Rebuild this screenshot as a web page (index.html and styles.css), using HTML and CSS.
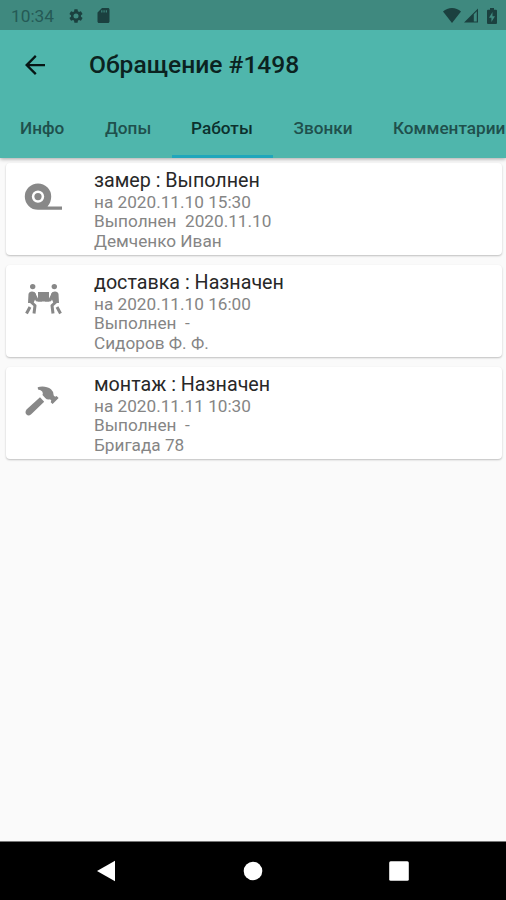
FILE: index.html
```html
<!DOCTYPE html>
<html lang="ru">
<head>
<meta charset="utf-8">
<title>Обращение #1498</title>
<link rel="stylesheet" href="styles.css">
</head>
<body>
<div class="screen">
  <header class="top">
    <div class="status">
      <span class="clock">10:34</span>
      <svg class="gear" viewBox="0 0 24 24"><path fill-rule="evenodd" d="M19.4 13a7.500 7.500 0 0 0 0-2l2.100-1.650c.2-.15.25-.4.120-.64l-2-3.460a.5.500 0 0 0-.6-.22l-2.500 1a7.300 7.300 0 0 0-1.700-.98l-.38-2.650A.5.500 0 0 0 14 2h-4a.5.500 0 0 0-.5.420L9.130 5.070c-.6.250-1.170.580-1.690.980l-2.490-1a.5.500 0 0 0-.61.220l-2 3.460c-.13.220-.07.490.120.640L4.570 11a7.900 7.900 0 0 0 0 2l-2.110 1.650a.5.500 0 0 0-.12.640l2 3.460c.12.220.39.300.61.220l2.490-1c.52.400 1.080.730 1.690.980l.38 2.650c.03.240.240.420.490.420h4c.25 0 .46-.18.490-.42l.38-2.650c.61-.25 1.170-.59 1.690-.98l2.490 1c.23.090.490 0 .61-.22l2-3.460a.5.500 0 0 0-.12-.64zM12 15.800a3.800 3.800 0 1 1 0-7.600 3.800 3.800 0 0 1 0 7.600z"/></svg>
      <svg class="sd" viewBox="4 2 16 20"><path fill-rule="evenodd" d="M18 2h-8L4 8v12c0 1.100.9 2 2 2h12c1.100 0 2-.9 2-2V4c0-1.100-.9-2-2-2zM9 5h1.500v3H9zm3 0h1.500v3H12zm3 0h1.500v3H15z"/></svg>
      <span class="spacer"></span>
      <svg class="wifi" viewBox="0 0 18 15"><path d="M9 15 0 3.600C2.500 1.200 5.600 0 9 0s6.500 1.200 9 3.600z"/></svg>
      <svg class="signal" viewBox="0 0 15 15"><path fill-rule="evenodd" d="M0 15 15 0v15zM10.500 6.200V13.800h3.200V3z"/></svg>
      <svg class="battery" viewBox="0 0 10 16"><path fill-rule="evenodd" d="M3 0h4v1.700h2q1 0 1 1V15q0 1-1 1H1q-1 0-1-1V2.700q0-1 1-1h2zM5.500 4 2 9.800h2.400V14L8 8.200H5.500z"/></svg>
    </div>
    <div class="appbar">
      <svg class="back" viewBox="4 4 16 16"><path d="M20 11.100H7.600l5.650-5.700L12 4l-8 8 8 8 1.300-1.400-5.700-5.700H20z"/></svg>
      <h1>Обращение #1498</h1>
    </div>
    <nav class="tabs">
      <a class="tab info">Инфо</a>
      <a class="tab extras">Допы</a>
      <a class="tab active">Работы</a>
      <a class="tab calls">Звонки</a>
      <a class="tab comments">Комментарии</a>
    </nav>
  </header>
  <main class="list">
    <article class="card">
      <div class="icon"><svg viewBox="0 0 40 40"><path fill-rule="evenodd" d="M38 29.800H14A13.200 13.200 0 1 1 27.200 16.600q0 6-3.700 10H38zM14 10.400a6.200 6.200 0 1 0 0 12.400 6.200 6.200 0 0 0 0-12.400z"/><circle cx="14" cy="16.600" r="3.600"/></svg></div>
      <div class="text"><h2>замер : Выполнен</h2><p>на 2020.11.10 15:30</p><p>Выполнен&nbsp; 2020.11.10</p><p>Демченко Иван</p></div>
    </article>
    <article class="card">
      <div class="icon"><svg viewBox="0 0 40 40"><circle cx="8.700" cy="4.600" r="2.700"/><circle cx="30.300" cy="4.600" r="2.700"/><path d="M14 10h11v9.500H14z"/><g class="limbs"><path d="M7.500 12 6.500 19.500l4.500 4-1 8M9.500 11l3.500 7H18M6 25l-3.500 6.500M31.500 12l1 7.500-4.500 4 1 8M29.500 11 26 18h-5M33 25l3.500 6.500"/></g><path d="M4.500 12Q5 9.500 8 9.500t4 3l-.5 4-2 4.500H4zM34.500 12Q34 9.500 31 9.500t-4 3l.5 4 2 4.500H35z"/></svg></div>
      <div class="text"><h2>доставка : Назначен</h2><p>на 2020.11.10 16:00</p><p>Выполнен&nbsp; -</p><p>Сидоров Ф. Ф.</p></div>
    </article>
    <article class="card">
      <div class="icon"><svg viewBox="0 0 40 40"><path d="m16 13.300 4.200 4.500L7.200 30.200Q4.500 32.500 2.500 30.500T2.500 25.500zM13.700 3.300C18 1.700 23.500 2.500 27 5.300q3 2.700 2.700 6.200l1.400 1.300 1.500-.8 2 2-6 6-1.900-1.800.6-1.700-1.300-1.200q-3 .7-4.800-1.400l-2.700-2.800Q20.200 6.800 14 5.500z"/></svg></div>
      <div class="text"><h2>монтаж : Назначен</h2><p>на 2020.11.11 10:30</p><p>Выполнен&nbsp; -</p><p>Бригада 78</p></div>
    </article>
  </main>
  <footer class="navbar">
    <svg viewBox="0 0 22 22"><path d="M2 11 20 .700v20.600z"/></svg>
    <svg viewBox="0 0 22 22"><circle cx="11" cy="11" r="9.300"/></svg>
    <svg viewBox="0 0 22 22"><rect x="1.200" y="1.200" width="19.600" height="19.600" rx="1.500"/></svg>
  </footer>
</div>
</body>
</html>
```

FILE: styles.css
```css
* { box-sizing: border-box; }
body { margin: 0; font-family: Roboto, "Liberation Sans", sans-serif; background: #fafafa; }
h1, h2, p { margin: 0; }
svg { display: block; flex: none; }
.screen { width: 506px; height: 900px; display: flex; flex-direction: column; overflow: hidden; }

.top { height: 158px; flex: none; background: #4fb6ac; box-shadow: 0 1px 4px rgba(0, 0, 0, .35); z-index: 1; }
.status { height: 30px; display: flex; align-items: center; padding: 1px 9px 0 11px; background: #3f897f; color: #255a56; fill: #1b403f; }
.clock { width: 57px; font-size: 17.300px; line-height: 28px; white-space: nowrap; }
.gear { width: 16px; height: 16px; }
.sd { width: 13px; height: 15px; margin-left: 13px; }
.spacer { flex: 1; }
.wifi { width: 18px; height: 15px; }
.signal { width: 14px; height: 15px; margin-left: 3px; }
.battery { width: 10px; height: 16px; margin-left: 9px; }

.appbar { height: 69px; display: flex; align-items: center; padding-left: 25px; }
.back { width: 20px; height: 20px; fill: #071615; }
h1 { margin-left: 44px; padding-top: 1px; font-size: 24.600px; font-weight: 500; line-height: 30px; color: #0b2220; white-space: nowrap; }

.tabs { height: 59px; display: flex; }
.tab { flex: none; padding-left: 20px; font-size: 17.200px; font-weight: 500; line-height: 58px; color: #1f504c; white-space: nowrap; }
.info { width: 85px; }
.extras { width: 87px; }
.active { width: 101px; padding-left: 19px; color: #0c302d; border-bottom: 3px solid #20a6bb; }
.calls { width: 100px; padding-left: 20.500px; }
.comments { width: 160px; }

.list { flex: 1; display: flex; flex-direction: column; gap: 10px; padding: 5px 4px 0 6px; }
.card { height: 92px; display: flex; background: #fff; border-radius: 4px; box-shadow: 0 1px 2px rgba(0, 0, 0, .24); }
.icon { width: 88px; padding: 17px 0 0 18px; }
.icon svg { width: 40px; height: 40px; fill: #888; }
.limbs { fill: none; stroke: #888; stroke-width: 3; stroke-linecap: butt; stroke-linejoin: round; }
.text { padding-top: 4.500px; color: #858585; }
h2 { font-size: 19.700px; font-weight: 400; line-height: 25px; color: #282828; white-space: nowrap; }
p { font-size: 17.200px; line-height: 19.700px; white-space: nowrap; }

.navbar { height: 59px; flex: none; display: flex; justify-content: space-between; align-items: center; padding: 0 96px 0 95px; background: #000; border-top: 1px solid #777; }
.navbar svg { width: 22px; height: 22px; fill: #fff; }
```
